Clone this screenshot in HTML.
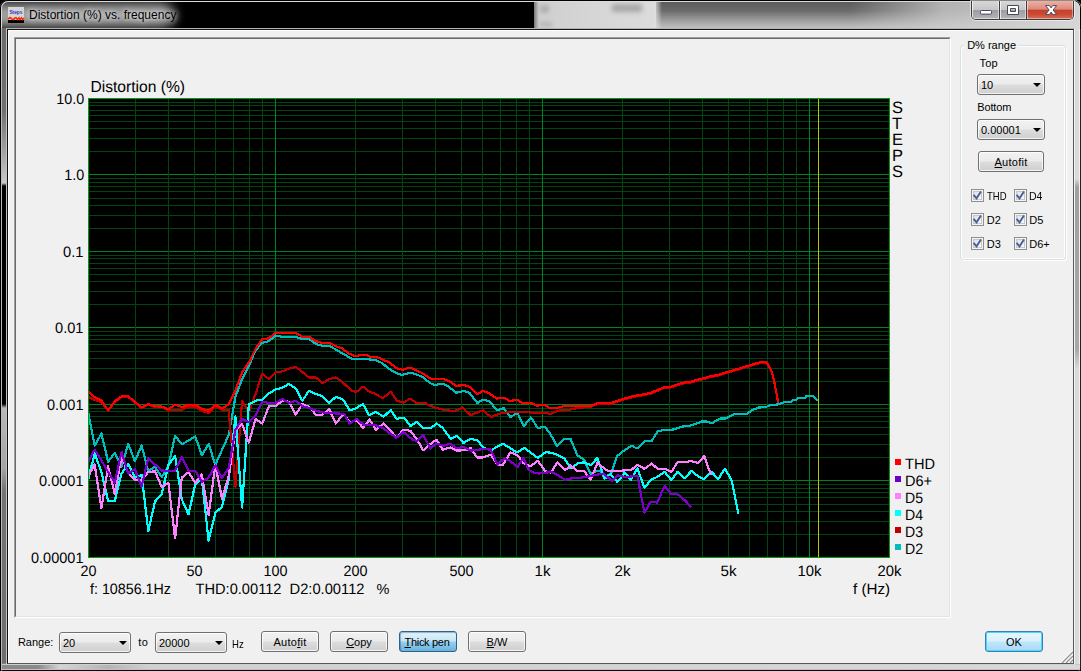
<!DOCTYPE html>
<html><head><meta charset="utf-8"><title>Distortion (%) vs. frequency</title>
<style>
html,body{margin:0;padding:0;background:#000;}
body{width:1081px;height:671px;position:relative;overflow:hidden;font-family:"Liberation Sans",Arial,sans-serif;font-size:11px;color:#000;}
#frame{position:absolute;left:0;top:0;width:1081px;height:671px;border-radius:7px 7px 3px 3px;overflow:hidden;background:#000;}
#tb-left{position:absolute;left:0;top:0;width:540px;height:30px;background:#000;overflow:hidden;}
#tb-glow{position:absolute;left:-40px;top:3px;width:214px;height:24px;border-radius:12px;background:#a2a2a2;filter:blur(6px);}
#tb-mid{position:absolute;left:534px;top:0;width:122px;height:30px;background:linear-gradient(90deg,#777 0,#cfcfcf 5px,#d6d6d6 50%,#dcdcdc 100%);}
#tb-mid i{position:absolute;left:78px;top:4px;width:30px;height:8px;background:#9a9a9a;filter:blur(2.5px);opacity:.8;}
#tb-right{position:absolute;left:656px;top:0;width:425px;height:30px;background:linear-gradient(180deg,#585858 0,#6a6a6a 35%,#a8a8a8 75%,#c8c8c8 100%);}
#tb-right2{position:absolute;left:850px;top:0;width:231px;height:30px;background:linear-gradient(90deg,rgba(205,205,205,0) 0,rgba(205,205,205,.75) 40%,rgba(216,216,216,.95) 100%);}
#tb-edge{position:absolute;left:654px;top:0;width:8px;height:30px;background:linear-gradient(90deg,rgba(222,222,222,1) 0,rgba(222,222,222,0) 100%);}
#tb-mid b{position:absolute;left:6px;top:5px;width:9px;height:8px;background:#a8a8a8;filter:blur(2px);opacity:.8;}
#tb-mid s{position:absolute;left:6px;top:22px;width:12px;height:5px;background:#b0b0b0;filter:blur(2px);opacity:.8;}
#tb-top{position:absolute;left:1px;top:1px;width:1077px;height:40px;border:1px solid #dcdcdc;border-bottom:none;border-radius:7px 7px 0 0;box-shadow:0 0 0 1px #000;clip-path:inset(-2px -2px 12px -2px);}
#fl{position:absolute;left:0;top:28px;width:8px;height:643px;background:linear-gradient(90deg,#000 0,#000 1px,#b8b8b8 1px,#b8b8b8 2px,#7c7c7c 2px,#848484 6px,#c4c4c4 6px,#c4c4c4 7px,#101010 7px,#101010 8px);}
#fl i{position:absolute;left:2px;top:0;width:4px;height:635px;background:linear-gradient(180deg,#6a6a6a 0,#707070 82px,#a0a0a0 122px,#c8c8c8 155px,#000 158px,#000 376px,#b8b8b8 380px,#a4a4a4 440px,#747474 462px,#6e6e6e 635px);}
#fr i{position:absolute;left:2px;top:150px;width:4px;height:190px;background:linear-gradient(180deg,rgba(160,160,160,0) 0,rgba(160,160,160,1) 8px,rgba(168,168,168,1) 170px,rgba(168,168,168,0) 190px);}
#fr{position:absolute;left:1073px;top:29px;width:8px;height:642px;background:linear-gradient(90deg,#3c3c3c 0,#3c3c3c 1px,#f4f4f4 1px,#f4f4f4 2px,#d8d8d8 2px,#dcdcdc 6px,#f0f0f0 6px,#f0f0f0 7px,#222 7px,#222 8px);}
#fb{position:absolute;left:2px;top:664px;width:1078px;height:7px;background:linear-gradient(180deg,#c8c8c8 0,#c8c8c8 1px,#8a8a8a 1px,#8a8a8a 5px,#c0c0c0 5px,#c0c0c0 6px,#0a0a0a 6px,#0a0a0a 7px);}
#fb2{position:absolute;left:8px;top:665px;width:1072px;height:4px;background:linear-gradient(90deg,rgba(212,212,212,0) 0,rgba(212,212,212,0) 30px,rgba(212,212,212,1) 52px,#b4b4b4 100px,#d0d0d0 140px,#d8d8d8 100%);}
#client{position:absolute;left:8px;top:30px;width:1065px;height:633px;background:#f0f0f0;}
#cbd{position:absolute;left:6px;top:28px;width:1067px;height:635px;border:1px solid;border-color:#b4b4b4 #f4f4f4 #d0d0d0 #c4c4c4;}
#cbd i{position:absolute;left:0;top:0;width:1065px;height:633px;border:1px solid;border-color:#141414 #585858 #585858 #101010;}
#client:before{content:"";position:absolute;left:0;top:0;width:1065px;height:1px;background:#fff;}
#client:after{content:"";position:absolute;left:0;top:0;width:1px;height:633px;background:#fff;}
#title{position:absolute;left:29px;top:7px;font-size:12px;line-height:16px;color:#000;white-space:nowrap;text-shadow:0 0 5px rgba(255,255,255,.9),0 0 9px rgba(255,255,255,.7);}
#icon{position:absolute;left:8px;top:7px;width:16px;height:16px;}
#panel{position:absolute;left:14px;top:37px;width:933px;height:577px;border:2px solid;border-color:#a0a0a0 #fff #fff #a0a0a0;}
#panel:after{content:"";position:absolute;left:0;top:0;right:0;bottom:0;border:1px solid;border-color:#696969 #e3e3e3 #e3e3e3 #696969;margin:-1px;}
.chart{position:absolute;left:0;top:0;}
.combo{position:absolute;height:19px;border:1px solid #707070;border-radius:3px;background:linear-gradient(180deg,#f2f2f2 0,#ebebeb 48%,#dddddd 52%,#cfcfcf 100%);box-shadow:inset 0 0 0 1px rgba(255,255,255,.75);}
.combo span{position:absolute;left:3px;top:4px;line-height:13px;}
.combo i{position:absolute;right:3.5px;top:8px;width:0;height:0;border-left:4px solid transparent;border-right:4px solid transparent;border-top:4.5px solid #000;}
.btn{position:absolute;height:19px;width:56px;border:1px solid #707070;border-radius:3px;background:linear-gradient(180deg,#f2f2f2 0,#ebebeb 48%,#dddddd 52%,#cfcfcf 100%);box-shadow:inset 0 0 0 1px rgba(255,255,255,.8);text-align:center;line-height:20px;}
.btn.on{border-color:#2c628b;background:linear-gradient(180deg,#e5f4fc 0,#c4e5f6 48%,#98d1ef 52%,#68b3db 100%);box-shadow:inset 1px 1px 1px rgba(0,60,100,.35);}
.btn.def{border-color:#3c7fb1;background:linear-gradient(180deg,#eaf6fd 0,#d9f0fc 48%,#bee6fd 52%,#a7d9f5 100%);box-shadow:inset 0 0 0 1px #48d8fb;}
u{text-decoration:underline;}
.lbl{position:absolute;white-space:nowrap;line-height:13px;}
.cb{position:absolute;width:11px;height:11px;border:1px solid #8e8f8f;background:linear-gradient(135deg,#d2d5da 0,#f0f1f3 55%,#fff 100%);box-shadow:inset 0 0 0 1px #f4f4f4, inset 0 0 0 2px #c4c8cc;}
.cb svg{position:absolute;left:0;top:0;}
#grp{position:absolute;left:960px;top:45px;width:104px;height:213px;border:1px solid #d5dfe5;border-radius:3px;box-shadow:inset 0 0 0 1px #fff, 1px 1px 0 #fff;}
.grpl{padding:0 2px 0 3px;margin-left:-3px;background:#f0f0f0;}

#cap{position:absolute;left:971px;top:1px;width:101px;height:18px;border:1px solid #3c3c3c;border-top:none;border-radius:0 0 5px 5px;overflow:hidden;box-shadow:0 0 0 1px rgba(255,255,255,.55);}
#cap div{position:absolute;top:0;height:18px;}
#cmin{left:0;width:27px;background:linear-gradient(180deg,#d8d8d8 0,#c6c6c6 48%,#9c9ca2 52%,#b4b4ba 100%);box-shadow:inset 1px 0 0 rgba(255,255,255,.7), inset -1px 0 0 rgba(255,255,255,.5), inset 0 -1px 0 rgba(255,255,255,.5);}
#cmax{left:28px;width:26px;background:linear-gradient(180deg,#d8d8d8 0,#c6c6c6 48%,#9c9ca2 52%,#b4b4ba 100%);box-shadow:inset 1px 0 0 rgba(255,255,255,.7), inset -1px 0 0 rgba(255,255,255,.5), inset 0 -1px 0 rgba(255,255,255,.5);border-left:1px solid #3c3c3c;margin-left:-1px;}
#cclose{left:55px;width:46px;background:linear-gradient(180deg,#eeb0a2 0,#dc8a7a 45%,#c4402c 52%,#cc4a32 75%,#d8705c 100%);border-left:1px solid #3c3c3c;margin-left:-1px;box-shadow:inset 1px 0 0 rgba(255,255,255,.5), inset -1px 0 0 rgba(255,255,255,.4), inset 0 -1px 0 rgba(255,255,255,.4);}
#capg{position:absolute;left:971px;top:0;}
#grip{position:absolute;left:1060px;top:650px;}
</style></head><body>
<div id="frame">
 <div id="tb-left"><div id="tb-glow"></div></div>
 <div id="tb-mid"><i></i><b></b><s></s></div>
 <div id="tb-right"></div><div id="tb-right2"></div><div id="tb-edge"></div><div id="tb-top"></div>
 <div id="fr"><i></i></div><div id="fl"><i></i></div><div id="fb"></div><div id="fb2"></div>
 <div id="cbd"><i></i></div><div id="client"></div>
</div>
<div id="cap"><div id="cmin"></div><div id="cmax"></div><div id="cclose"></div></div>
<svg id="capg" width="104" height="20" viewBox="0 0 104 20"><rect x="9.5" y="10.5" width="11" height="3.6" rx="0.8" fill="#fff" stroke="#454a5c" stroke-width="1"/><path d="M36.5 5.5 h11 v9 h-11 z M39.5 8.5 v3 h5 v-3 z" fill="#fff" fill-rule="evenodd" stroke="#454a5c" stroke-width="1"/><path d="M74.6 5.6 h3.9 l1.6 2.3 l1.6 -2.3 h3.9 l-3.5 4.4 l3.5 4.4 h-3.9 l-1.6 -2.3 l-1.6 2.3 h-3.9 l3.5 -4.4 z" fill="#fff" stroke="#454a5c" stroke-width="1" stroke-linejoin="round"/></svg>
<svg id="icon" viewBox="0 0 16 16" shape-rendering="crispEdges"><rect width="16" height="16" fill="#d6d6d6"/><rect y="12.6" width="16" height="3.4" fill="#000"/><polyline points="0,12 2,10.6 4,12 5.5,12.5 7,11 8,10.6 9.5,12.5 11,10.8 12,12.5 13.5,10.8 14.5,12.5 16,11" fill="none" stroke="#ff2a00" stroke-width="1.6" shape-rendering="auto"/><text x="1.4" y="7" font-family="'Liberation Sans',sans-serif" font-size="5" font-weight="bold" fill="#3434c0" shape-rendering="auto" textLength="13" lengthAdjust="spacingAndGlyphs">Steps</text></svg>
<div id="title">Distortion (%) vs. frequency</div>
<div id="panel"></div>
<svg class="chart" width="1081" height="671" viewBox="0 0 1081 671" shape-rendering="crispEdges">
<rect x="88" y="98" width="802" height="460" fill="#000"/>
<rect x="89" y="102" width="800" height="1" fill="#004512"/>
<rect x="89" y="105" width="800" height="1" fill="#004512"/>
<rect x="89" y="110" width="800" height="1" fill="#004512"/>
<rect x="89" y="115" width="800" height="1" fill="#004512"/>
<rect x="89" y="121" width="800" height="1" fill="#004512"/>
<rect x="89" y="128" width="800" height="1" fill="#004512"/>
<rect x="89" y="138" width="800" height="1" fill="#004512"/>
<rect x="89" y="151" width="800" height="1" fill="#004512"/>
<rect x="89" y="174" width="800" height="1" fill="#008222"/>
<rect x="89" y="178" width="800" height="1" fill="#004512"/>
<rect x="89" y="182" width="800" height="1" fill="#004512"/>
<rect x="89" y="186" width="800" height="1" fill="#004512"/>
<rect x="89" y="191" width="800" height="1" fill="#004512"/>
<rect x="89" y="198" width="800" height="1" fill="#004512"/>
<rect x="89" y="205" width="800" height="1" fill="#004512"/>
<rect x="89" y="215" width="800" height="1" fill="#004512"/>
<rect x="89" y="228" width="800" height="1" fill="#004512"/>
<rect x="89" y="251" width="800" height="1" fill="#008222"/>
<rect x="89" y="255" width="800" height="1" fill="#004512"/>
<rect x="89" y="258" width="800" height="1" fill="#004512"/>
<rect x="89" y="263" width="800" height="1" fill="#004512"/>
<rect x="89" y="268" width="800" height="1" fill="#004512"/>
<rect x="89" y="274" width="800" height="1" fill="#004512"/>
<rect x="89" y="281" width="800" height="1" fill="#004512"/>
<rect x="89" y="291" width="800" height="1" fill="#004512"/>
<rect x="89" y="304" width="800" height="1" fill="#004512"/>
<rect x="89" y="327" width="800" height="1" fill="#008222"/>
<rect x="89" y="331" width="800" height="1" fill="#004512"/>
<rect x="89" y="335" width="800" height="1" fill="#004512"/>
<rect x="89" y="339" width="800" height="1" fill="#004512"/>
<rect x="89" y="344" width="800" height="1" fill="#004512"/>
<rect x="89" y="351" width="800" height="1" fill="#004512"/>
<rect x="89" y="358" width="800" height="1" fill="#004512"/>
<rect x="89" y="368" width="800" height="1" fill="#004512"/>
<rect x="89" y="381" width="800" height="1" fill="#004512"/>
<rect x="89" y="404" width="800" height="1" fill="#008222"/>
<rect x="89" y="408" width="800" height="1" fill="#004512"/>
<rect x="89" y="411" width="800" height="1" fill="#004512"/>
<rect x="89" y="416" width="800" height="1" fill="#004512"/>
<rect x="89" y="421" width="800" height="1" fill="#004512"/>
<rect x="89" y="427" width="800" height="1" fill="#004512"/>
<rect x="89" y="434" width="800" height="1" fill="#004512"/>
<rect x="89" y="444" width="800" height="1" fill="#004512"/>
<rect x="89" y="457" width="800" height="1" fill="#004512"/>
<rect x="89" y="480" width="800" height="1" fill="#008222"/>
<rect x="89" y="484" width="800" height="1" fill="#004512"/>
<rect x="89" y="488" width="800" height="1" fill="#004512"/>
<rect x="89" y="492" width="800" height="1" fill="#004512"/>
<rect x="89" y="497" width="800" height="1" fill="#004512"/>
<rect x="89" y="504" width="800" height="1" fill="#004512"/>
<rect x="89" y="511" width="800" height="1" fill="#004512"/>
<rect x="89" y="521" width="800" height="1" fill="#004512"/>
<rect x="89" y="534" width="800" height="1" fill="#004512"/>
<rect x="135" y="99" width="1" height="458" fill="#004512"/>
<rect x="168" y="99" width="1" height="458" fill="#004512"/>
<rect x="194" y="99" width="1" height="458" fill="#004512"/>
<rect x="215" y="99" width="1" height="458" fill="#004512"/>
<rect x="233" y="99" width="1" height="458" fill="#004512"/>
<rect x="249" y="99" width="1" height="458" fill="#004512"/>
<rect x="262" y="99" width="1" height="458" fill="#004512"/>
<rect x="275" y="99" width="1" height="458" fill="#008222"/>
<rect x="355" y="99" width="1" height="458" fill="#004512"/>
<rect x="402" y="99" width="1" height="458" fill="#004512"/>
<rect x="435" y="99" width="1" height="458" fill="#004512"/>
<rect x="461" y="99" width="1" height="458" fill="#004512"/>
<rect x="482" y="99" width="1" height="458" fill="#004512"/>
<rect x="500" y="99" width="1" height="458" fill="#004512"/>
<rect x="516" y="99" width="1" height="458" fill="#004512"/>
<rect x="529" y="99" width="1" height="458" fill="#004512"/>
<rect x="542" y="99" width="1" height="458" fill="#008222"/>
<rect x="622" y="99" width="1" height="458" fill="#004512"/>
<rect x="669" y="99" width="1" height="458" fill="#004512"/>
<rect x="702" y="99" width="1" height="458" fill="#004512"/>
<rect x="728" y="99" width="1" height="458" fill="#004512"/>
<rect x="749" y="99" width="1" height="458" fill="#004512"/>
<rect x="767" y="99" width="1" height="458" fill="#004512"/>
<rect x="783" y="99" width="1" height="458" fill="#004512"/>
<rect x="796" y="99" width="1" height="458" fill="#004512"/>
<rect x="809" y="99" width="1" height="458" fill="#008222"/>
<rect x="818" y="99" width="1" height="458" fill="#c4c400"/>
<clipPath id="cc"><rect x="89" y="99" width="800" height="458"/></clipPath><g clip-path="url(#cc)">
<polyline points="88.0,411.5 94.7,445.6 101.4,433.6 108.1,461.6 114.8,452.7 121.5,467 128.2,443.7 134.9,461.2 141.6,445.6 148.3,471.3 155.0,466.8 161.7,477.2 168.4,466 175.1,435.7 181.8,444.3 188.5,440.6 195.2,436.5 201.9,455.1 208.6,443.9 215.3,464.8 222.0,449.9 228.7,435 235.4,396.9 242.1,379.2 248.8,366.4 255.5,350.2 262.2,342.9 268.9,341.2 275.6,335.6 282.3,336.8 289.0,336.8 295.7,336.8 302.4,339 309.1,339 315.8,344 322.5,345.7 329.2,345.7 335.9,349.6 342.6,353.5 352.3,359 369,359.4 375.8,360.1 381.9,362.9 388,368 393.6,371.9 402,375 409.8,372.8 416,374.1 422.7,377.2 430.5,383.3 435,385 442.8,383.6 447.3,385.8 456.2,392.7 463.9,390.9 469.5,392.9 477.3,403 482.9,399.6 489.6,401.3 496.9,410.3 503.6,408 506.4,411.4 510.3,417 517.6,413 523.7,426.2 531,417.5 537.7,428 544.9,426.6 550,433.3 557.2,446.3 563.9,439 570.6,439 577.3,455.2 584,459.6 590.7,474.2 596.8,470.8 600.2,470.8 604.6,478.6 611.9,471.9 616.9,456.3 622.5,451.8 631.5,445.7 637,448.5 644.9,441.2 651.6,441.2 657.7,431.1 665,430 673.9,429.5 681.7,426.7 690,425.6 694.5,424.3 701.8,421.5 706.2,421.5 712.4,423.2 717.4,419.8 720.8,418.4 726.3,418.4 734.2,413.9 746.5,413.9 752,410.3 758.7,407.5 765.4,407.2 769.9,405.3 777.7,404.4 785.6,402 791.1,401.6 793,399.7 796,400 799,397.6 805.5,397.6 806.1,396.4 808.5,395.8 812.4,395.8 815,397.9 817.7,400.3" fill="none" stroke="#00bebe" stroke-width="2.2" stroke-linejoin="round"/>
<polyline points="88.0,397 94.7,399.9 101.4,402 108.1,410.7 114.8,402 121.5,397 128.2,397 134.9,402.5 141.6,408 148.3,404.7 155.0,407 161.7,407.3 168.4,410.7 175.1,409.6 181.8,409.6 188.5,407.3 195.2,407.3 201.9,411 208.6,412.9 215.3,406.2 222.0,409.6 228.7,410 235.4,486.7 242.1,401.3 248.8,412.4 255.5,394.2 262.2,373.6 268.9,379.2 275.6,372.5 282.3,371.4 289.0,368.6 295.7,366.9 302.4,372 309.1,377.5 315.8,377.5 322.5,383.1 329.2,379.2 335.9,377.5 342.6,382.3 351.2,390.3 356.2,392 362.9,386.6 370.2,392.2 373.5,393.1 383,398.1 390.8,391.8 397,400.9 403.1,402.6 410.4,398.7 416,402.7 424.9,402.7 429.4,405.5 436.1,408 443.9,409.9 450.6,410.7 455,410.8 462.8,407.5 470.6,415.1 482.9,410.3 490.8,417 499.7,413.6 512,411.7 528.7,411.7 532.1,413 546.6,413 550,414.2 557.8,410.8 566.7,409.7 570,409.7 577.8,408 591.2,406.6 597.9,403.8 611.3,403.8 622.5,399.9 632.6,397.1 650.4,393.8 665,387.6 670.6,387.6 681.7,383.7 690,382.6 710.7,377 717.4,375.8 759.9,363 766.6,363 771.6,371.2 774.4,382.4 778.3,403.1" fill="none" stroke="#c00000" stroke-width="2.2" stroke-linejoin="round"/>
<polyline points="88.0,480 94.7,453.4 101.4,472 108.1,500.9 114.8,500.9 121.5,473.5 128.2,463.8 134.9,477.2 141.6,475 148.3,531 155.0,501.6 161.7,494.2 168.4,465 175.1,455.9 181.8,499.4 188.5,514.3 195.2,484.5 201.9,479 208.6,540.7 215.3,512.8 222.0,506.8 228.7,480 235.4,416.5 242.1,507.6 248.8,404.6 255.5,400.7 262.2,399.6 268.9,393.4 275.6,389.5 282.3,387.8 289.0,383.9 295.7,388.4 302.4,400.7 309.1,390.6 315.8,394 322.5,396.2 329.2,402.9 335.9,396.8 342.6,399.4 343.4,400.1 349.5,410.1 355.1,409 362.9,404 369,415.1 375.8,411.8 383.6,416.8 390.8,409.9 396.4,418.8 404.2,417.7 410.4,426 417.1,421.8 423.2,428 431.1,428 436.6,423.5 442.8,428 450.6,438.9 456.8,435.9 463.4,442.9 470.1,439 477.3,440.1 482.9,447.4 490.8,450.2 503,443.7 517,452.4 524.3,447.9 537.7,458 546.1,451.8 555.6,454.1 564.5,458.5 570.6,468.3 572.8,466.9 578.4,463 584,462.4 590.7,465.2 597.4,458 604.6,478.6 610.8,474.2 617.5,482 624.7,472.5 630.9,479.7 637.4,468.3 644.4,487.8 651.5,479.3 657.3,477 664.6,471.8 671.3,480.2 677.5,471.8 684.7,478.3 691.4,470.9 698.7,476.8 704.3,479.1 711.5,471.8 718.2,479.1 724.9,468.7 731.6,480.2 738.4,514.3" fill="none" stroke="#00ffff" stroke-width="2.2" stroke-linejoin="round"/>
<polyline points="88.0,476.5 94.7,464.6 101.4,508.3 108.1,466.4 114.8,494.2 121.5,456.4 128.2,472.8 134.9,479.5 141.6,480.2 148.3,472 155.0,471.3 161.7,486.9 168.4,483 175.1,538.4 181.8,477.5 188.5,472.2 195.2,482.7 201.9,474.5 208.6,515 215.3,464.8 222.0,498.6 228.7,476 235.4,431 242.1,424 248.8,442.6 255.5,419.1 262.2,423.6 268.9,406.3 275.6,406.3 282.3,400.7 289.0,401.8 295.7,414.6 302.4,404 309.1,406.8 315.8,414.6 322.5,414.6 329.2,409 335.9,423.6 342.6,415 343.9,414 349.5,422.4 356.8,420.2 362.9,428 369.6,419.6 375.8,429.7 383.6,423.5 389.2,429.1 396.4,437.5 403.7,429.7 410.4,430.8 417.1,439.7 423.2,450.3 429.4,444.7 436.6,439.7 442.8,449.8 450.1,447.5 456.8,450.6 465.6,450.2 470.6,447.9 476.8,457.4 482.9,457.4 490.8,454.6 497.5,464.7 503,464.7 510.3,452.4 517.6,455.2 523.2,463 530.4,466.4 537.7,460.8 545.5,471.4 551.1,472.5 557.2,462.5 565.1,470.3 570.6,465.3 577.3,471.4 584,470.8 590.7,479.7 597.4,463 606.9,470.3 611.9,471.4 620.3,470.8 631.5,469.7 637.6,464.9 644.4,468.8 651.7,463.6 657.4,468.6 664.8,468.6 671.5,471.8 677.6,462.1 687.5,461.8 690.9,461 698.1,462.9 704.3,456.2 711,475.2" fill="none" stroke="#ff80ff" stroke-width="2.2" stroke-linejoin="round"/>
<polyline points="88.0,462 94.7,449.7 101.4,460.3 108.1,472 114.8,482.5 121.5,451.9 128.2,473.5 134.9,469 141.6,486.9 148.3,457.9 155.0,464.6 161.7,470.5 168.4,470.8 175.1,470.8 181.8,456.6 188.5,470.8 195.2,470.8 201.9,481.9 208.6,477.5 215.3,465.5 222.0,478.2 228.7,467.8 235.4,430 242.1,419.1 248.8,421.9 255.5,415.8 262.2,401.8 268.9,402.9 275.6,402.9 282.3,399 289.0,402.9 295.7,400.7 302.4,406.3 309.1,407.9 315.8,410.7 322.5,412.4 329.2,413 335.9,413.5 342.6,413.7 343.9,413.7 349.5,423.5 356.8,418.8 364,425.2 375.8,425.2 383.6,428.5 396.4,438 403.1,431.9 412.6,439.7 417.1,440.8 423.2,434.7 430.5,448.7 436.1,443.6 443.9,445.9 450.1,443.6 456.8,448.4 463.4,446.8 470.6,450.7 482.9,449.1 490.8,449.6 497.5,464.7 504.2,458.5 508.6,460.2 517.6,466.9 523.2,458 528.7,469.7 533.2,472.5 538.8,473.6 551.1,472 557.8,475.3 565.1,479.8 570,478.6 584,477.3 596.8,474.7 603.5,473.6 611.9,480.9 618,475.3 624.7,477 637.4,476 644.5,512.6 650.6,502 657.3,502.5 664.6,485.8 670.8,493.6 676.9,493.6 684.2,499.7 691.4,507" fill="none" stroke="#7d00c8" stroke-width="2.2" stroke-linejoin="round"/>
<polyline points="88.0,391 94.7,397.3 101.4,400.6 108.1,410.3 114.8,401.4 121.5,396.2 128.2,396.2 134.9,401.8 141.6,407.3 148.3,404 155.0,406.2 161.7,406.6 168.4,409.2 175.1,404.7 181.8,407 188.5,404.7 195.2,404.7 201.9,408.8 208.6,410.7 215.3,404.7 222.0,408.5 228.7,404.4 235.4,390.6 242.1,372.5 248.8,362.5 255.5,349 262.2,339 268.9,338.4 275.6,332.8 282.3,332.8 289.0,332.8 295.7,332.8 302.4,336.8 309.1,336.8 315.8,341.2 322.5,342.9 329.2,342.9 335.9,346.3 342.6,348.7 348.4,353.4 355.6,356.2 361.2,354.9 366.8,355.1 370.2,356.8 375.8,356.8 381.3,359 389.2,362.4 397,368.5 402.6,369.9 409.8,367.6 414.9,369.6 422.1,373 430.5,378.6 442.8,378.8 448.4,380.8 456.2,385.8 463.9,385.1 469.5,386.8 477.3,394.3 482.9,390.9 487.4,392.4 496.9,398.5 504.2,397.6 509.7,401 517,399.9 522.6,403 531.5,403 536.6,405.8 544.4,404.7 549.4,408 556.1,408 565.6,405.8 575,405.8 591.2,405.8 597.9,403 611.3,403 622.5,399.1 632.6,396.3 650.4,393 665,386.8 670.6,386.8 681.7,382.9 690,381.8 710.7,376.3 717.4,375.1 759.9,362.3 766.6,362.3 771.6,371.2 774.4,382.4 778.3,403.1" fill="none" stroke="#ff0000" stroke-width="2.2" stroke-linejoin="round"/>
</g>
<rect x="88.5" y="98.5" width="801" height="459" fill="none" stroke="#009a10" stroke-width="1"/>
<g font-family="'Liberation Sans', Arial, sans-serif" fill="#000" shape-rendering="auto" text-rendering="geometricPrecision">
<text x="90.5" y="92" font-size="16" textLength="94.5" lengthAdjust="spacingAndGlyphs">Distortion (%)</text>
<text x="84.3" y="103.6" font-size="15" text-anchor="end" textLength="28" lengthAdjust="spacingAndGlyphs">10.0</text>
<text x="84.3" y="179.6" font-size="15" text-anchor="end" textLength="20" lengthAdjust="spacingAndGlyphs">1.0</text>
<text x="83.5" y="256.6" font-size="15" text-anchor="end" textLength="20.5" lengthAdjust="spacingAndGlyphs">0.1</text>
<text x="83.5" y="332.6" font-size="15" text-anchor="end" textLength="28.5" lengthAdjust="spacingAndGlyphs">0.01</text>
<text x="83.5" y="409.6" font-size="15" text-anchor="end" textLength="36.5" lengthAdjust="spacingAndGlyphs">0.001</text>
<text x="83.5" y="485.6" font-size="15" text-anchor="end" textLength="44.5" lengthAdjust="spacingAndGlyphs">0.0001</text>
<text x="83.5" y="562.6" font-size="15" text-anchor="end" textLength="52.5" lengthAdjust="spacingAndGlyphs">0.00001</text>
<text x="88.5" y="576" font-size="15" text-anchor="middle" textLength="16" lengthAdjust="spacingAndGlyphs">20</text>
<text x="194.5" y="576" font-size="15" text-anchor="middle" textLength="16" lengthAdjust="spacingAndGlyphs">50</text>
<text x="275.5" y="576" font-size="15" text-anchor="middle" textLength="24" lengthAdjust="spacingAndGlyphs">100</text>
<text x="355.5" y="576" font-size="15" text-anchor="middle" textLength="24" lengthAdjust="spacingAndGlyphs">200</text>
<text x="461.5" y="576" font-size="15" text-anchor="middle" textLength="24" lengthAdjust="spacingAndGlyphs">500</text>
<text x="542.5" y="576" font-size="15" text-anchor="middle" textLength="16" lengthAdjust="spacingAndGlyphs">1k</text>
<text x="622.5" y="576" font-size="15" text-anchor="middle" textLength="16" lengthAdjust="spacingAndGlyphs">2k</text>
<text x="728.5" y="576" font-size="15" text-anchor="middle" textLength="16" lengthAdjust="spacingAndGlyphs">5k</text>
<text x="809.5" y="576" font-size="15" text-anchor="middle" textLength="24" lengthAdjust="spacingAndGlyphs">10k</text>
<text x="889.5" y="576" font-size="15" text-anchor="middle" textLength="24" lengthAdjust="spacingAndGlyphs">20k</text>
<text x="90" y="594" font-size="15" textLength="81" lengthAdjust="spacingAndGlyphs">f: 10856.1Hz</text>
<text x="195.5" y="594" font-size="15" textLength="86" lengthAdjust="spacingAndGlyphs">THD:0.00112</text>
<text x="289.5" y="594" font-size="15" textLength="75" lengthAdjust="spacingAndGlyphs">D2:0.00112</text>
<text x="376.5" y="594" font-size="14.5">%</text>
<text x="853" y="594" font-size="15" textLength="37" lengthAdjust="spacingAndGlyphs">f (Hz)</text>
<text x="892" y="112.5" font-size="16.5">S</text>
<text x="892" y="128.5" font-size="16.5">T</text>
<text x="892" y="144.5" font-size="16.5">E</text>
<text x="892" y="160.5" font-size="16.5">P</text>
<text x="892" y="176.5" font-size="16.5">S</text>
<text x="905" y="468.5" font-size="15" textLength="30" lengthAdjust="spacingAndGlyphs">THD</text>
<text x="905" y="485.5" font-size="15" textLength="27" lengthAdjust="spacingAndGlyphs">D6+</text>
<text x="905" y="502.5" font-size="15" textLength="18" lengthAdjust="spacingAndGlyphs">D5</text>
<text x="905" y="519.5" font-size="15" textLength="18" lengthAdjust="spacingAndGlyphs">D4</text>
<text x="905" y="536.5" font-size="15" textLength="18" lengthAdjust="spacingAndGlyphs">D3</text>
<text x="905" y="553.5" font-size="15" textLength="18" lengthAdjust="spacingAndGlyphs">D2</text>
</g>
<rect x="895" y="459" width="6" height="6" fill="#ff0000"/>
<rect x="895" y="476" width="6" height="6" fill="#6a00c8"/>
<rect x="895" y="493" width="6" height="6" fill="#ff80ff"/>
<rect x="895" y="510" width="6" height="6" fill="#00ffff"/>
<rect x="895" y="527" width="6" height="6" fill="#c00000"/>
<rect x="895" y="544" width="6" height="6" fill="#00bebe"/>
</svg>
<div id="grp"></div>
<div class="lbl grpl" style="left:967.2px;top:39px;letter-spacing:-0.01px;">D% range</div>
<div class="lbl " style="left:979.5px;top:57px;letter-spacing:0.18px;">Top</div>
<div class="lbl " style="left:977.2px;top:101px;letter-spacing:-0.12px;">Bottom</div>
<div class="lbl " style="left:986.7px;top:190px;transform:scaleX(0.864);transform-origin:0 0;">THD</div>
<div class="lbl " style="left:1029.3px;top:190px;transform:scaleX(0.958);transform-origin:0 0;">D4</div>
<div class="lbl " style="left:986.7px;top:214px;">D2</div>
<div class="lbl " style="left:1029.3px;top:214px;">D5</div>
<div class="lbl " style="left:986.7px;top:238px;">D3</div>
<div class="lbl " style="left:1029.3px;top:238px;">D6+</div>
<div class="lbl " style="left:17.9px;top:636px;letter-spacing:0.00px;">Range:</div>
<div class="lbl " style="left:138.3px;top:636px;letter-spacing:0.51px;">to</div>
<div class="lbl " style="left:231.5px;top:638px;transform:scaleX(0.872);transform-origin:0 0;">Hz</div>
<div class="combo" style="left:977px;top:74px;width:66px"><span>10</span><i></i></div>
<div class="combo" style="left:977px;top:119px;width:66px"><span>0.00001</span><i></i></div>
<div class="btn" style="left:978px;top:151px;width:64px;letter-spacing:.25px"><u>A</u>utofit</div>
<div class="cb" style="left:971px;top:189px"><svg width="11" height="11" viewBox="0 0 11 11"><path d="M1.6 4.9 L4.5 8.3 L9.0 1.5" fill="none" stroke="#4a5f97" stroke-width="1.9"/></svg></div>
<div class="cb" style="left:971px;top:213px"><svg width="11" height="11" viewBox="0 0 11 11"><path d="M1.6 4.9 L4.5 8.3 L9.0 1.5" fill="none" stroke="#4a5f97" stroke-width="1.9"/></svg></div>
<div class="cb" style="left:971px;top:237px"><svg width="11" height="11" viewBox="0 0 11 11"><path d="M1.6 4.9 L4.5 8.3 L9.0 1.5" fill="none" stroke="#4a5f97" stroke-width="1.9"/></svg></div>
<div class="cb" style="left:1014px;top:189px"><svg width="11" height="11" viewBox="0 0 11 11"><path d="M1.6 4.9 L4.5 8.3 L9.0 1.5" fill="none" stroke="#4a5f97" stroke-width="1.9"/></svg></div>
<div class="cb" style="left:1014px;top:213px"><svg width="11" height="11" viewBox="0 0 11 11"><path d="M1.6 4.9 L4.5 8.3 L9.0 1.5" fill="none" stroke="#4a5f97" stroke-width="1.9"/></svg></div>
<div class="cb" style="left:1014px;top:237px"><svg width="11" height="11" viewBox="0 0 11 11"><path d="M1.6 4.9 L4.5 8.3 L9.0 1.5" fill="none" stroke="#4a5f97" stroke-width="1.9"/></svg></div>
<div class="combo" style="left:59px;top:632px;width:70px"><span>20</span><i></i></div>
<div class="combo" style="left:155px;top:632px;width:70px"><span>20000</span><i></i></div>
<div class="btn" style="left:261px;top:631px;letter-spacing:.25px">Auto<u>f</u>it</div>
<div class="btn" style="left:330px;top:631px"><u>C</u>opy</div>
<div class="btn on" style="left:399px;top:631px;letter-spacing:-.3px;text-indent:-2px"><u>T</u>hick pen</div>
<div class="btn" style="left:468px;top:631px"><u>B</u>/W</div>
<div class="btn def" style="left:985px;top:631px">OK</div>
<svg id="grip" width="13" height="13" viewBox="0 0 13 13"><g stroke-width="1.2"><path d="M1 13 L13 1 M5 13 L13 5 M9 13 L13 9" stroke="#fff"/><path d="M2 13 L13 2 M6 13 L13 6 M10 13 L13 10" stroke="#8c8c8c"/></g></svg>
</body></html>
